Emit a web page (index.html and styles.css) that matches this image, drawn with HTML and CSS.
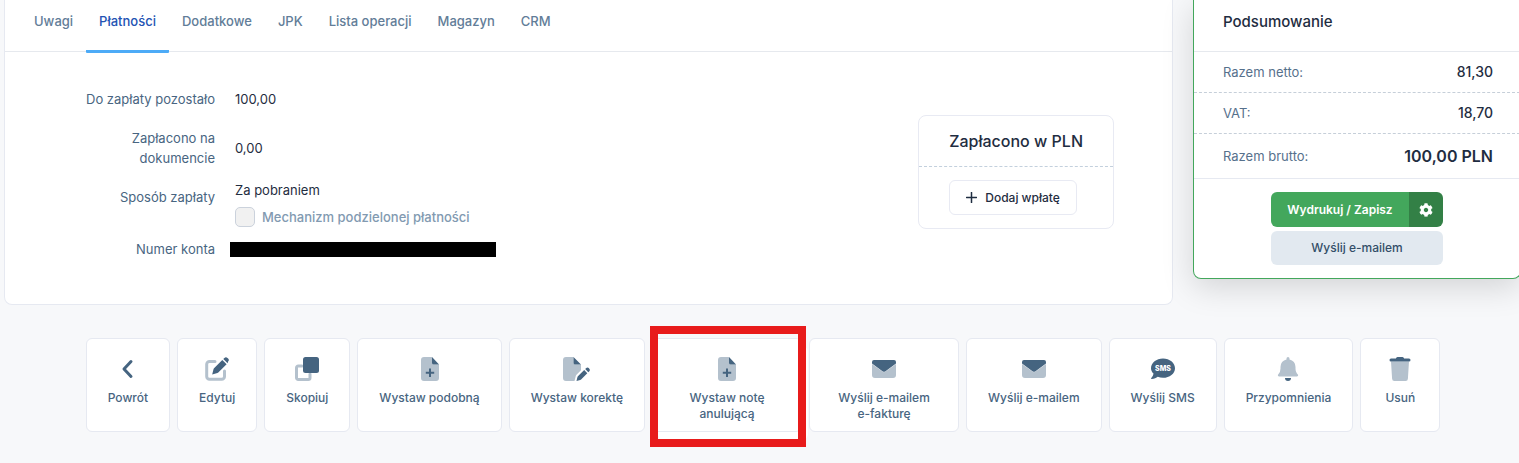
FILE: index.html
```html
<!DOCTYPE html>
<html lang="pl">
<head>
    <meta charset="UTF-8">
    <meta name="viewport" content="width=device-width, initial-scale=1.0">
    <title>Faktura - Płatności</title>
    <link rel="stylesheet" href="styles.css">
</head>
<body>
    <div class="page">
        <main class="card document">
            <nav class="tabs">
                <a href="#uwagi" class="tab">Uwagi</a>
                <a href="#platnosci" class="tab active">Płatności</a>
                <a href="#dodatkowe" class="tab">Dodatkowe</a>
                <a href="#jpk" class="tab">JPK</a>
                <a href="#operacje" class="tab">Lista operacji</a>
                <a href="#magazyn" class="tab">Magazyn</a>
                <a href="#crm" class="tab">CRM</a>
            </nav>

            <div class="document-body">
                <dl class="details">
                    <dt class="first">Do zapłaty pozostało</dt>
                    <dd class="first">100,00</dd>
                    <dt>Zapłacono na dokumencie</dt>
                    <dd>0,00</dd>
                    <dt class="method">Sposób zapłaty</dt>
                    <dd>
                        Za pobraniem
                        <label class="check"><input type="checkbox" disabled> Mechanizm podzielonej płatności</label>
                    </dd>
                    <dt>Numer konta</dt>
                    <dd><div class="redacted"></div></dd>
                </dl>

                <section class="paid">
                    <h2>Zapłacono w PLN</h2>
                    <div class="paid-body">
                        <button type="button" class="btn-add">
                            <svg width="11" height="11" viewBox="0 0 11 11"><path d="M5.5 0.5v10M0.5 5.5h10" stroke="currentColor" stroke-width="1.5" stroke-linecap="round"/></svg>
                            Dodaj wpłatę
                        </button>
                    </div>
                </section>
            </div>
        </main>

        <aside class="summary">
            <h2>Podsumowanie</h2>
            <div class="row"><span>Razem netto:</span><b>81,30</b></div>
            <div class="row"><span>VAT:</span><b>18,70</b></div>
            <div class="row total"><span>Razem brutto:</span><b>100,00 PLN</b></div>
            <div class="summary-actions">
                <div class="btn-group">
                    <button type="button" class="btn-save">Wydrukuj / Zapisz</button>
                    <button type="button" class="btn-gear" aria-label="Ustawienia">
                        <svg width="14" height="14" viewBox="0 0 512 512" fill="currentColor"><path d="M487.400 315.700l-42.600-24.600c4.300-23.200 4.300-47 0-70.200l42.600-24.600c4.900-2.800 7.100-8.600 5.500-14-11.100-35.600-30-67.800-54.700-94.600-3.800-4.100-10-5.100-14.800-2.300L380.800 110c-17.900-15.400-38.500-27.300-60.800-35.100V25.800c0-5.600-3.900-10.500-9.400-11.700-36.700-8.200-74.300-7.800-109.200 0-5.500 1.200-9.400 6.100-9.400 11.700V75c-22.200 7.900-42.800 19.800-60.800 35.100L88.700 85.500c-4.900-2.800-11-1.900-14.800 2.300-24.700 26.700-43.600 58.900-54.700 94.600-1.700 5.400.6 11.200 5.500 14L67.300 221c-4.300 23.200-4.300 47 0 70.200l-42.600 24.600c-4.900 2.800-7.100 8.600-5.500 14 11.100 35.600 30 67.800 54.700 94.600 3.800 4.100 10 5.100 14.800 2.300l42.600-24.600c17.900 15.400 38.500 27.300 60.800 35.100v49.200c0 5.600 3.900 10.500 9.400 11.700 36.700 8.200 74.300 7.800 109.200 0 5.500-1.200 9.400-6.100 9.400-11.700v-49.200c22.200-7.900 42.800-19.800 60.800-35.100l42.600 24.600c4.900 2.800 11 1.900 14.800-2.300 24.700-26.700 43.600-58.900 54.700-94.600 1.500-5.500-.7-11.300-5.600-14.100zM256 336c-44.100 0-80-35.900-80-80s35.900-80 80-80 80 35.900 80 80-35.900 80-80 80z"/></svg>
                    </button>
                </div>
                <button type="button" class="btn-mail">Wyślij e-mailem</button>
            </div>
        </aside>
    </div>

    <div class="actions">
        <button type="button" class="action">
            <svg class="icon" viewBox="0 0 24 24"><path class="line" d="M15 4.500L8 12l7 7.500"/></svg>
            Powrót
        </button>
        <button type="button" class="action">
            <svg class="icon" viewBox="0 0 24 24">
                <path class="line soft" d="M10 4.500H4.500a2.800 2.800 0 0 0-2.800 2.800v12.200a2.800 2.800 0 0 0 2.800 2.800h12.200a2.800 2.800 0 0 0 2.800-2.800V14"/>
                <path d="M7.200 17.500l1.300-5.300a2 2 0 0 1 .5-.9L17.300 3l4.300 4.300-8.300 8.300a2 2 0 0 1-.9.500zM18.300 2l1.100-1.100a2.200 2.200 0 0 1 3.100 0l.6.600a2.200 2.200 0 0 1 0 3.100l-.5 1.700z"/>
            </svg>
            Edytuj
        </button>
        <button type="button" class="action">
            <svg class="icon" viewBox="0 0 24 24">
                <path class="line soft" d="M7 9H3.200a1.700 1.700 0 0 0-1.700 1.700v10.100a1.700 1.700 0 0 0 1.700 1.700h10.100a1.700 1.700 0 0 0 1.700-1.700V17"/>
                <rect x="8" y="0" width="16" height="16" rx="2.500"/>
            </svg>
            Skopiuj
        </button>
        <button type="button" class="action">
            <svg class="icon" viewBox="0 0 24 24">
                <path class="soft" d="M6 0h8v6a1.500 1.500 0 0 0 1.500 1.500H21V21a3 3 0 0 1-3 3H6a3 3 0 0 1-3-3V3a3 3 0 0 1 3-3z"/>
                <path d="M14 0l7 7.500h-5.500A1.500 1.500 0 0 1 14 6z"/>
                <path class="thin" d="M12 11.500v8.400M7.800 15.700h8.400"/>
            </svg>
            Wystaw podobną
        </button>
        <button type="button" class="action">
            <svg class="icon wide" viewBox="0 0 27 24">
                <path class="soft" d="M3 0h7.500v6A1.500 1.500 0 0 0 12 7.500h6v5.800l-4.300 4.300a4 4 0 0 0-1 1.700L11.500 24H3a3 3 0 0 1-3-3V3a3 3 0 0 1 3-3z"/>
                <path d="M10.500 0l7.500 7.500h-6A1.500 1.500 0 0 1 10.500 6zM13.500 24l.9-3.800a2 2 0 0 1 .5-.9l6.300-6.200 3.100 3.100-6.200 6.300a2 2 0 0 1-.9.500zM22.200 12.100l.8-.8a2.100 2.100 0 0 1 3 0l.1.100a2.100 2.100 0 0 1 0 3l-.8.800z"/>
            </svg>
            Wystaw korektę
        </button>
        <button type="button" class="action two-line marked">
            <svg class="icon" viewBox="0 0 24 24">
                <path class="soft" d="M6 0h8v6a1.500 1.500 0 0 0 1.500 1.500H21V21a3 3 0 0 1-3 3H6a3 3 0 0 1-3-3V3a3 3 0 0 1 3-3z"/>
                <path d="M14 0l7 7.500h-5.500A1.500 1.500 0 0 1 14 6z"/>
                <path class="thin" d="M12 11.500v8.400M7.800 15.700h8.400"/>
            </svg>
            <span>Wystaw notę<br>anulującą</span>
        </button>
        <button type="button" class="action two-line">
            <svg class="icon" viewBox="0 0 24 24">
                <path class="soft" d="M0 7l10.700 7.800a2.200 2.200 0 0 0 2.600 0L24 7v11a3 3 0 0 1-3 3H3a3 3 0 0 1-3-3z"/>
                <path d="M2 3h20a2 2 0 0 1 2 2v1.500L13.200 14.400a2 2 0 0 1-2.400 0L0 6.500V5a2 2 0 0 1 2-2z"/>
            </svg>
            <span>Wyślij e-mailem<br>e-fakturę</span>
        </button>
        <button type="button" class="action">
            <svg class="icon" viewBox="0 0 24 24">
                <path class="soft" d="M0 7l10.700 7.800a2.200 2.200 0 0 0 2.600 0L24 7v11a3 3 0 0 1-3 3H3a3 3 0 0 1-3-3z"/>
                <path d="M2 3h20a2 2 0 0 1 2 2v1.500L13.200 14.400a2 2 0 0 1-2.400 0L0 6.500V5a2 2 0 0 1 2-2z"/>
            </svg>
            Wyślij e-mailem
        </button>
        <button type="button" class="action">
            <svg class="icon" viewBox="0 0 24 24">
                <path d="M12 1.500c6.600 0 12 4.300 12 9.700s-5.400 9.600-12 9.600c-1.900 0-3.700-.3-5.200-1C5.300 21 3.200 22 .8 22c-.7 0-.9-.7-.5-1.100 1-1 2-2.600 2.200-4.300C.9 15 0 13.200 0 11.200 0 5.800 5.400 1.500 12 1.500z"/>
                <text class="sms" x="12" y="14" text-anchor="middle">SMS</text>
            </svg>
            Wyślij SMS
        </button>
        <button type="button" class="action">
            <svg class="icon" viewBox="0 0 24 24">
                <path class="soft" d="M12 0a1.500 1.500 0 0 1 1.500 1.500v.9A7.500 7.500 0 0 1 19.500 10v1.500c0 2.300.8 4.300 2.300 6.100l.4.400a1.500 1.500 0 0 1-1.200 1.500H3A1.500 1.500 0 0 1 1.800 18l.4-.4a9 9 0 0 0 2.300-6.100V10a7.500 7.500 0 0 1 6-7.600v-.9A1.500 1.500 0 0 1 12 0z"/>
                <path d="M9 21h6a3 3 0 0 1-6 0z"/>
            </svg>
            Przypomnienia
        </button>
        <button type="button" class="action">
            <svg class="icon" viewBox="0 0 24 24">
                <path class="soft" d="M3 4.500h18l-1.100 17.300a2.300 2.300 0 0 1-2.300 2.200H6.400a2.300 2.300 0 0 1-2.300-2.200z"/>
                <path d="M8.300.8A1.500 1.500 0 0 1 9.600 0h4.800a1.500 1.500 0 0 1 1.300.8l.4.700H21a1.500 1.500 0 0 1 0 3H3a1.500 1.500 0 0 1 0-3h4.900z"/>
            </svg>
            Usuń
        </button>
    </div>
</body>
</html>
```
FILE: styles.css
```css
* { box-sizing: border-box; }
body { margin: 0; background: #f7f8fa; color: #1f2d41; font: 13px/20px Inter, "Liberation Sans", sans-serif; overflow: hidden; }
button { font: inherit; font-size: 12px; font-weight: 500; cursor: pointer; }
h2, dl, dd { margin: 0; }
h2 { font-weight: 500; }

.page { display: flex; align-items: flex-start; gap: 20px; margin-right: -2px; padding-left: 4px; }

/* document card */
.document { flex: 1; background: #fff; border: 1px solid #e6e9f1; border-top: 0; border-radius: 0 0 8px 8px; }
.tabs { display: flex; height: 52px; padding: 0 16px; border-bottom: 1px solid #e6e9ee; }
.tab { height: 53px; padding: 11px 13px 0; color: #627d98; font-weight: 500; text-decoration: none; }
.tab.active { color: #2353b3; border-bottom: 3px solid #4dabf7; border-radius: 1px; }
.document-body { display: flex; justify-content: space-between; align-items: flex-start; padding: 37px 58px 45px 76px; }

.details { display: grid; grid-template-columns: 134px auto; column-gap: 20px; row-gap: 12px; align-items: center; }
.details dt { color: #486581; text-align: right; }
.details .first { margin-bottom: 7px; }
.details .method { align-self: start; padding-top: 7px; }
.check { display: flex; align-items: center; gap: 7px; margin-top: 7px; color: #829ab1; font-weight: 500; }
.check input { appearance: none; width: 20px; height: 20px; margin: 0; background: #f1f1f1; border: 1px solid #cbd2dc; border-radius: 5px; }
.redacted { width: 266px; height: 15px; margin-left: -5px; background: #000; }

.paid { margin-top: 26px; border: 1px solid #e8eaf3; border-radius: 8px; }
.paid h2 { padding: 14px 30px; font-size: 16px; line-height: 22px; border-bottom: 1px dashed #c3d0dd; }
.paid-body { padding: 13px 30px; }
.btn-add { display: flex; align-items: center; gap: 8px; height: 35px; padding: 0 16px; color: #1f2d41; background: #fff; border: 1px solid #e8eaf3; border-radius: 6px; }

/* summary */
.summary { width: 328px; background: #fff; border: 1px solid #43a75c; border-top: 0; border-radius: 0 0 8px 8px; box-shadow: 0 8px 32px rgba(0, 0, 0, 0.15); }
.summary h2 { padding: 11px 29px 19px; font-size: 15px; line-height: 21px; border-bottom: 1px solid #e6e9ee; }
.row { display: flex; justify-content: space-between; align-items: center; height: 41px; padding: 0 27px 0 29px; color: #56708c; border-bottom: 1px dashed #c6cfd9; }
.row b { color: #1f2d41; font-size: 14px; font-weight: 500; }
.row.total { height: 45px; border-bottom: 1px solid #e6e9f1; }
.row.total b { font-size: 16px; font-weight: 600; }
.summary-actions { display: flex; flex-direction: column; gap: 4px; width: 172px; margin: 0 auto; padding: 13px 0; }
.btn-group { display: flex; height: 35px; border-radius: 6px; overflow: hidden; }
.btn-group button { border: 0; color: #fff; }
.btn-save { flex: 1; padding: 0; background: #43a75c; font-weight: 600; }
.btn-gear { display: flex; align-items: center; justify-content: center; width: 34px; padding: 0; background: #338046; }
.btn-mail { height: 34px; color: #334e68; background: #e2e9f0; border: 0; border-radius: 6px; }

/* bottom buttons */
.actions { display: flex; justify-content: center; gap: 7px; padding: 33px 0 31px 7px; }
.action { position: relative; display: flex; flex-direction: column; align-items: center; gap: 9px; min-width: 80px; height: 94px; padding: 18px 21px 0; color: #486581; background: #fff; border: 1px solid #e6e9f1; border-radius: 6px; line-height: 16px; white-space: nowrap; }
.two-line { width: 150px; }
.icon { flex: none; width: 24px; height: 24px; fill: #456480; }
.icon.wide { width: 27px; }
.icon .soft { fill: #b4c1cd; }
.icon .line { fill: none; stroke: #456480; stroke-width: 3; stroke-linecap: round; stroke-linejoin: round; }
.icon .line.soft { stroke: #b4c1cd; }
.icon .thin { stroke: #456480; stroke-width: 2; }
.icon .sms { fill: #fff; font: 800 7px Inter, sans-serif; }

/* red frame around the highlighted action */
.marked { border-left-color: #fff; box-shadow: 6px 8px 0 #fff; }
.marked::after { content: ""; position: absolute; inset: -13px -5px -16px -3px; border: 8px solid #e81b1b; }
```
